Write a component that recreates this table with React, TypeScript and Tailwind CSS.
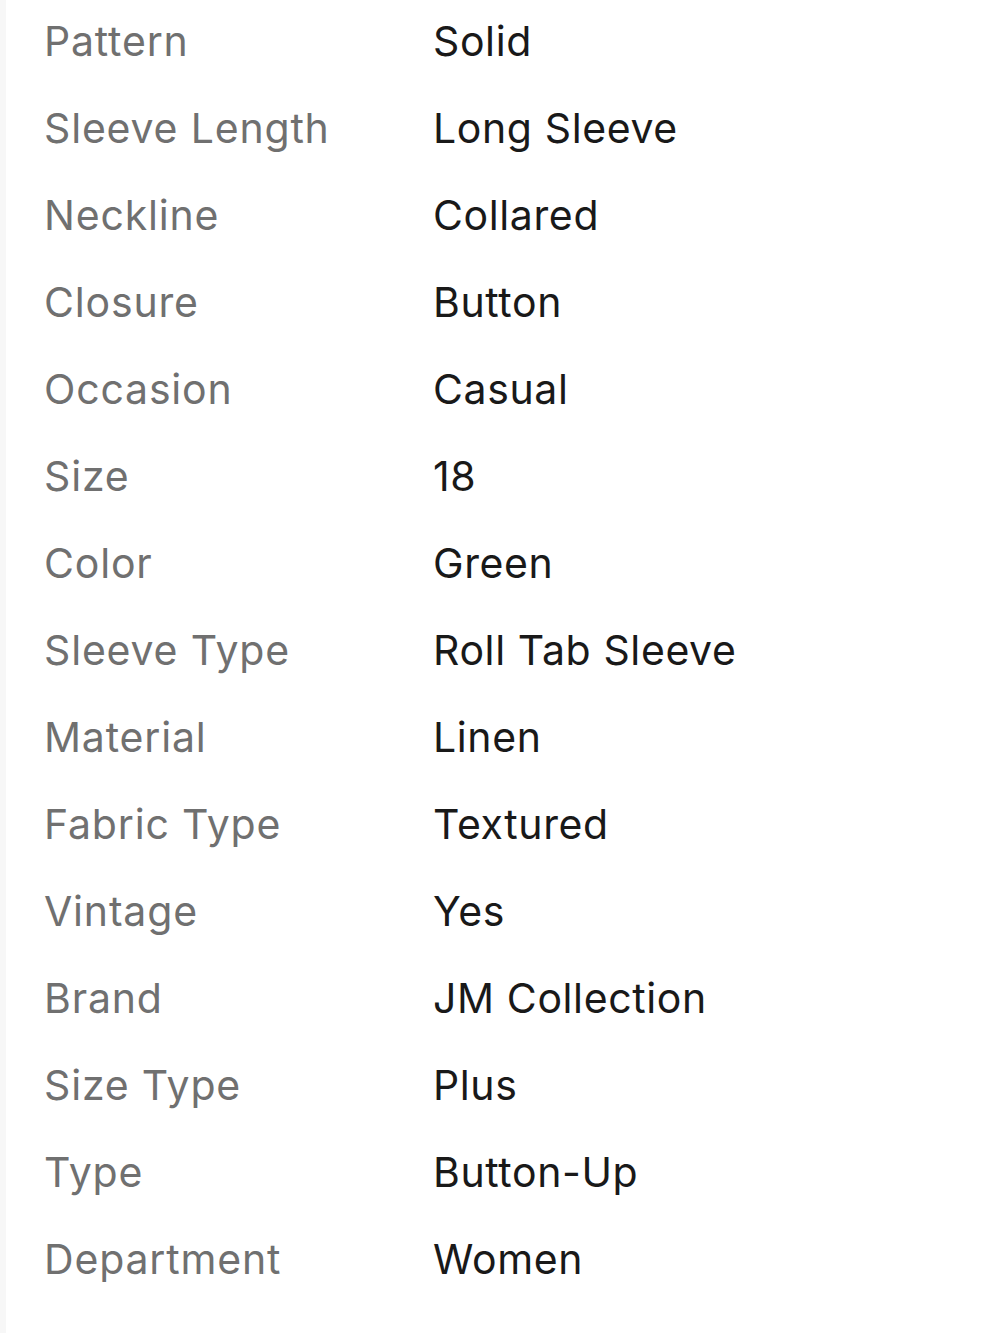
const specs = [
  ["Pattern", "Solid"],
  ["Sleeve Length", "Long Sleeve"],
  ["Neckline", "Collared"],
  ["Closure", "Button"],
  ["Occasion", "Casual"],
  ["Size", "18"],
  ["Color", "Green"],
  ["Sleeve Type", "Roll Tab Sleeve"],
  ["Material", "Linen"],
  ["Fabric Type", "Textured"],
  ["Vintage", "Yes"],
  ["Brand", "JM Collection"],
  ["Size Type", "Plus"],
  ["Type", "Button-Up"],
  ["Department", "Women"],
];

export default function App() {
  return (
    <div className="flex min-h-[1333px] w-[1000px] bg-white font-['Inter',sans-serif]">
      <div className="w-[6px] shrink-0 bg-[#f7f7f7]" />
      <div className="-mt-[2px] flex flex-1 flex-col pl-[38px]">
        {specs.map(([label, value]) => (
          <div key={label} className="flex h-[87px] items-center">
            <span className="w-[389px] shrink-0 text-[41px] tracking-[0.02em] text-[#707070]">
              {label}
            </span>
            <span className="text-[41px] tracking-[0.015em] text-[#191919]">
              {value}
            </span>
          </div>
        ))}
      </div>
    </div>
  );
}
